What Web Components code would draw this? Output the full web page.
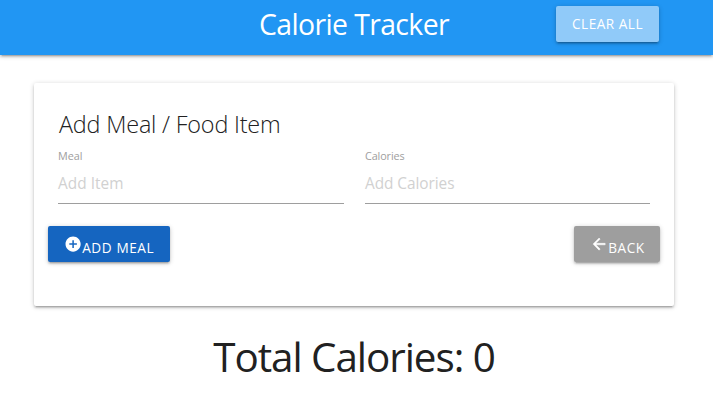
<!DOCTYPE html>
<html lang="en">
<head>
<meta charset="utf-8">
<title>Calorie Tracker</title>
<style>
  body { margin: 0; background: #fff; color: rgba(0,0,0,.87); font-family: "Open Sans", "Noto Sans", sans-serif; }
</style>
</head>
<body>
<calorie-app></calorie-app>
<script>
const define = (name, html, setup) => customElements.define(name, class extends HTMLElement {
  connectedCallback() {
    if (this.shadowRoot) return;
    this.attachShadow({ mode: 'open' }).innerHTML = html;
    if (setup) setup(this);
  }
});

// A single line of text whose tracking is tuned to a given width.
define('fit-text', `<style>
  :host { display: block; white-space: nowrap; width: max-content; }
  span { display: inline-block; }
</style><span><slot></slot></span>`, el => {
  const span = el.shadowRoot.querySelector('span');
  const fit = () => {
    span.style.letterSpacing = '0px';
    const gap = Number(el.getAttribute('width')) - span.getBoundingClientRect().width;
    span.style.letterSpacing = (gap / el.textContent.length) + 'px';
  };
  fit();
  document.fonts.ready.then(fit);
});

define('app-button', `<style>
  :host { display: flex; box-sizing: border-box; height: 36px; padding: 0 16px; border-radius: 2px; color: #fff;
    font-size: 13.6px; line-height: 36px;
    box-shadow: 0 2px 2px 0 rgba(0,0,0,.14), 0 3px 1px -2px rgba(0,0,0,.12), 0 1px 5px 0 rgba(0,0,0,.2); }
  ::slotted(svg) { width: 18.2px; height: 18.2px; margin-top: 9px; fill: #fff; flex: none; }
  ::slotted(.low) { padding-top: 4px; }
</style><slot></slot>`);

define('nav-bar', `<style>
  :host { display: grid; grid-template-columns: 258px 1fr 103px 54px; height: 55px; background: #2196f3; color: #fff;
    box-shadow: 0 2px 2px 0 rgba(0,0,0,.14), 0 3px 1px -2px rgba(0,0,0,.12), 0 1px 5px 0 rgba(0,0,0,.2); }
  .title { grid-column: 2; padding-left: 1px; font-size: 28.4px; line-height: 49px; }
  app-button { grid-column: 3; width: 103px; margin-top: 6px; background: #90caf9; }
</style>
<fit-text class="title" width="190">Calorie Tracker</fit-text>
<app-button><fit-text width="71">CLEAR ALL</fit-text></app-button>`);

define('text-field', `<style>
  :host { display: block; height: 55px; border-bottom: 1px solid #9e9e9e; }
  .label { font-size: 10.8px; line-height: 16px; color: #9e9e9e; }
  .hint { font-size: 15.4px; line-height: 39px; color: #d1d1d1; }
</style><slot name="label" class="label"></slot><slot name="hint" class="hint"></slot>`);

define('meal-card', `<style>
  :host { display: block; box-sizing: border-box; width: 640px; height: 223px; margin: 28px 0 0 34px; padding: 23px 24px 0; border-radius: 2px; background: #fff;
    box-shadow: 0 2px 2px 0 rgba(0,0,0,.14), 0 3px 1px -2px rgba(0,0,0,.12), 0 1px 5px 0 rgba(0,0,0,.2); }
  .heading { padding-left: 1px; font-size: 23.4px; font-weight: 300; line-height: 36px; color: #212121; }
  .fields { display: grid; grid-template-columns: 286px 285px; gap: 21px; margin-top: 6px; }
  .actions { display: flex; justify-content: space-between; margin: 22px -10px 0; }
  .add { width: 122px; background: #1565c0; }
  .back { width: 86px; background: #9e9e9e; }
  .back path { stroke: #fff; stroke-width: .6; }
</style>
<fit-text class="heading" width="221.5">Add Meal / Food Item</fit-text>
<div class="fields">
  <text-field><fit-text slot="label" width="24.5">Meal</fit-text><fit-text slot="hint" width="65.5">Add Item</fit-text></text-field>
  <text-field><fit-text slot="label" width="39.5">Calories</fit-text><fit-text slot="hint" width="89.5">Add Calories</fit-text></text-field>
</div>
<div class="actions">
  <app-button class="add"><svg viewBox="0 0 24 24"><path d="M12 2C6.48 2 2 6.48 2 12s4.48 10 10 10 10-4.48 10-10S17.52 2 12 2zm5 11h-4v4h-2v-4H7v-2h4V7h2v4h4v2z"/></svg><fit-text class="low" width="72">ADD MEAL</fit-text></app-button>
  <app-button class="back"><svg viewBox="0 0 24 24"><path d="M20 11H7.83l5.59-5.59L12 4l-8 8 8 8 1.41-1.41L7.83 13H20v-2z"/></svg><fit-text class="low" width="36.5">BACK</fit-text></app-button>
</div>`);

define('calorie-total', `<style>
  :host { display: flex; justify-content: center; margin: 22px 5px 0 0; font-size: 40.4px; line-height: 58px; color: #212121; }
</style><fit-text width="281.5">Total Calories: 0</fit-text>`);

define('calorie-app', `<style>:host { display: block; height: 401px; overflow: hidden; }</style>
<nav-bar></nav-bar>
<meal-card></meal-card>
<calorie-total></calorie-total>`);
</script>
</body>
</html>
